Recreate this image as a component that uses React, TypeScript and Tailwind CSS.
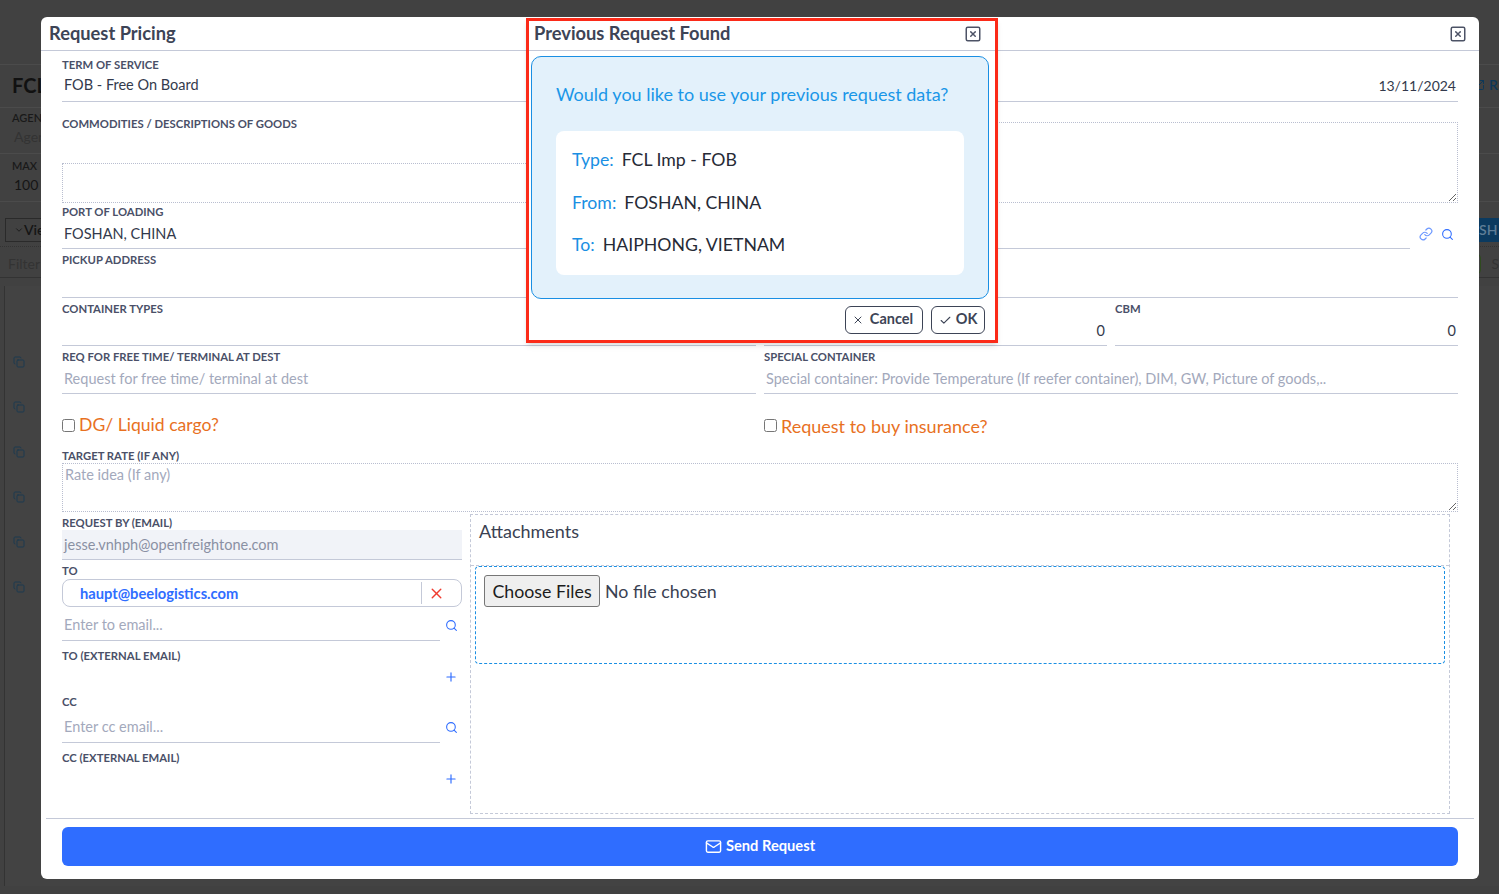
import React from 'react';
import { Check, ChevronDown, Copy, Link, Mail, Plus, Search, SquareArrowOutUpRight, SquareX, X } from 'lucide-react';

const labelClass = 'block h-[14px] text-[11.3px] leading-[14px] font-bold uppercase text-[#4a5068] whitespace-nowrap';
const valueClass = 'flex items-center px-[2px] text-[14.5px] text-[#333a4c] whitespace-nowrap';
const placeholderClass = 'w-full bg-transparent px-[2px] text-[14.5px] text-[#333a4c] outline-none placeholder:text-[#a3a9bc]';
const noteClass = 'w-full border border-dotted border-[#b9bed0] bg-transparent text-[14.5px] outline-none placeholder:text-[#a3a9bc]';

const Label: React.FC<{ children?: React.ReactNode }> = ({ children }) => <span className={labelClass}>{children}</span>;

// dimmed page that sits behind the modal
const BackgroundPage = () => {
  const rows = [361, 406, 451, 496, 541, 586];
  return (
    <div className="h-screen w-full overflow-hidden bg-[#414141]">
      <div className="h-[65px] border-b border-[#4b4b4b]" />
      <div className="flex h-[43px] items-center justify-between border-b border-[#4b4b4b] pb-[3px] pl-3">
        <span className="text-xl font-bold text-[#111111]">FCL</span>
        <span className="mr-px flex items-center gap-1 text-sm font-semibold text-[#0d3858]">
          <SquareArrowOutUpRight size={12} />
          R
        </span>
      </div>
      <div className="h-[46px] border-b border-[#4b4b4b] pl-3 pt-[2px]">
        <div className="text-[11px] font-semibold text-[#191919]">AGENT</div>
        <div className="pl-[2px] text-sm text-[#333333]">Agent</div>
      </div>
      <div className="h-[48px] border-b border-[#4b4b4b] pl-3 pt-1">
        <div className="text-[11px] font-semibold text-[#191919]">MAX</div>
        <div className="pl-[2px] text-sm text-[#151515]">100</div>
      </div>
      <div className="mt-4 flex h-[24px] items-center justify-between">
        <div className="ml-[5px] flex h-full w-[120px] items-center border border-[#2a2a2a] pl-2 text-sm font-semibold text-[#151515]">
          <ChevronDown size={10} />
          View
        </div>
        <div className="flex h-full w-[22px] items-center bg-[#0b3a5f] pl-[2px] text-sm font-semibold text-[#5f7d96]">SH</div>
      </div>
      <div className="mt-1 flex h-[31px] items-center justify-between border-t border-dotted border-[#333333] pl-2 pt-1">
        <span className="text-sm text-[#333333]">Filter</span>
        <span className="flex items-center gap-[10px]">
          <span className="h-5 w-[8px] rounded-r border border-[#2f4a1f]" />
          <span className="text-sm text-[#333333]">S</span>
        </span>
      </div>
      <div className="border-t border-[#333333]" />
      <div className="ml-1 mt-2 h-[600px] border-l border-[#333333] bg-[#434343]">
        <div className="flex flex-col gap-[33px] pl-2 pt-[70px]">
          {rows.map(y => (
            <Copy key={y} size={12} className="text-[#1d3a50]" />
          ))}
        </div>
      </div>
    </div>
  );
};

const EmailSearch: React.FC<{ placeholder: string }> = ({ placeholder }) => (
  <div className="flex h-[34px] items-center">
    <div className="flex h-full w-[378px] items-center border-b border-[#c4c9d8] pt-[2px]">
      <input placeholder={placeholder} className={placeholderClass} />
    </div>
    <Search size={13} className="ml-[5px] mt-[2px] text-[#2f6dff]" />
  </div>
);

const ExternalEmail: React.FC<{ label: string }> = ({ label }) => (
  <div className="mt-2 h-[46px]">
    <Label>{label}</Label>
    <div className="flex justify-end pr-[4px] pt-[7px]">
      <Plus size={14} className="text-[#2f6dff]" />
    </div>
  </div>
);

const PreviousRequestPopup = () => (
  <div className="absolute left-[485px] top-px h-[325px] w-[472px] border-[3px] border-[#fb2a18] bg-white shadow-md">
    <div className="flex h-[30px] items-center justify-between border-b border-[#c4c9d8] pb-[3px] pl-[5px] pr-[13px]">
      <span className="text-[18.3px] font-bold text-[#3d4456]">Previous Request Found</span>
      <SquareX size={18} className="text-[#4d5366]" />
    </div>
    <div className="ml-[2px] mt-[5px] h-[243px] w-[458px] rounded-[10px] border border-[#1a8fe3] bg-[#e3f1fb] px-6 pt-6">
      <div className="h-[26px] text-lg leading-[26px] text-[#1a97e8] whitespace-nowrap">Would you like to use your previous request data?</div>
      <div className="mt-6 rounded-lg bg-white px-4 py-2 text-[17.7px] leading-[42.5px] text-[#262a36]">
        <div><span className="mr-2 text-[#1a8fe3]">Type:</span>FCL Imp - FOB</div>
        <div><span className="mr-2 text-[#1a8fe3]">From:</span>FOSHAN, CHINA</div>
        <div><span className="mr-2 text-[#1a8fe3]">To:</span>HAIPHONG, VIETNAM</div>
      </div>
    </div>
    <div className="flex justify-end gap-2 pr-[10px] pt-[7px]">
      <button className="flex h-[28px] w-[78px] items-center justify-center gap-[6px] rounded-md border border-[#3d4456] pr-[3px] text-[14.5px] font-bold text-[#3d4456]">
        <X size={12} />
        <span className="pb-[2px]">Cancel</span>
      </button>
      <button className="flex h-[28px] w-[54px] items-center justify-center gap-[4px] rounded-md border border-[#3d4456] text-[14.5px] font-bold text-[#3d4456]">
        <Check size={13} />
        <span className="pb-[2px]">OK</span>
      </button>
    </div>
  </div>
);

const RequestPricingModal = () => (
  <div className="absolute left-[41px] top-[17px] flex h-[862px] w-[1438px] flex-col rounded-md bg-white">
    <div className="flex h-[34px] shrink-0 items-center justify-between border-b border-[#c4c9d8] pl-2 pr-[12px]">
      <span className="text-[18.3px] font-bold text-[#3d4456]">Request Pricing</span>
      <SquareX size={18} className="text-[#4d5366]" />
    </div>

    <div className="flex-1 px-[21px]">
      <div className="grid grid-cols-2 gap-x-2">
        <div className="border-b border-[#c4c9d8] pt-[7px]">
          <Label>Term of Service</Label>
          <div className={`${valueClass} h-[29px] pb-[3px]`}>FOB - Free On Board</div>
        </div>
        <div className="border-b border-[#c4c9d8] pt-[7px]">
          <Label>Valid Until</Label>
          <div className={`${valueClass} h-[29px] justify-end pb-[3px] !text-[14px]`}>13/11/2024</div>
        </div>
      </div>

      <div className="grid h-[101px] grid-cols-2 gap-x-2">
        <div className="flex flex-col justify-between pt-[15px]">
          <Label>Commodities / Descriptions of Goods</Label>
          <div className="h-[40px] border border-dotted border-[#b9bed0]" />
        </div>
        <div className="flex pt-5">
          <textarea className={`${noteClass} h-[81px]`} />
        </div>
      </div>

      <div className="grid grid-cols-2 gap-x-2">
        <div className="border-b border-[#c4c9d8] pt-[2px]">
          <Label>Port of Loading</Label>
          <div className={`${valueClass} h-[29px]`}>FOSHAN, CHINA</div>
        </div>
        <div className="flex pt-[2px]">
          <div className="flex-1 border-b border-[#c4c9d8]">
            <Label>Port of Discharge</Label>
            <div className="h-[29px]" />
          </div>
          <div className="flex w-[48px] items-center justify-end gap-[8px] pr-[4px] pt-[14px]">
            <Link size={14} className="text-[#6b97ff]" />
            <Search size={13} className="text-[#2f6dff]" />
          </div>
        </div>
      </div>

      <div className="border-b border-[#c4c9d8] pt-1">
        <Label>Pickup Address</Label>
        <div className="h-[30px]" />
      </div>

      <div className="grid grid-cols-4 gap-x-2">
        <div className="col-span-2 border-b border-[#c4c9d8] pt-1">
          <Label>Container Types</Label>
          <div className="h-[29px]" />
        </div>
        <div className="border-b border-[#c4c9d8] pt-1">
          <Label>GW</Label>
          <div className={`${valueClass} h-[29px] justify-end`}>0</div>
        </div>
        <div className="border-b border-[#c4c9d8] pt-1">
          <Label>CBM</Label>
          <div className={`${valueClass} h-[29px] justify-end`}>0</div>
        </div>
      </div>

      <div className="grid grid-cols-2 gap-x-2">
        <div className="border-b border-[#c4c9d8] pt-1">
          <Label>Req for free time/ terminal at dest</Label>
          <input placeholder="Request for free time/ terminal at dest" className={`${placeholderClass} h-[29px]`} />
        </div>
        <div className="border-b border-[#c4c9d8] pt-1">
          <Label>Special Container</Label>
          <input placeholder="Special container: Provide Temperature (If reefer container), DIM, GW, Picture of goods,.." className={`${placeholderClass} h-[29px]`} />
        </div>
      </div>

      <div className="grid h-[55px] grid-cols-2 gap-x-2 pt-2">
        <label className="flex items-center gap-1 text-[17.6px] text-[#e8711f]">
          <input type="checkbox" />
          DG/ Liquid cargo?
        </label>
        <label className="flex items-center gap-1 text-lg text-[#e8711f]">
          <input type="checkbox" />
          Request to buy insurance?
        </label>
      </div>

      <Label>Target Rate (If Any)</Label>
      <textarea placeholder="Rate idea (If any)" className={`${noteClass} block h-[49px] px-[2px]`} />

      <div className="mt-[2px] flex gap-2">
        <div className="w-[400px] shrink-0 pt-[2px]">
          <Label>Request By (Email)</Label>
          <div className="flex h-[30px] items-center border-b border-[#c4c9d8] bg-[#f1f3f8] px-[2px] text-[14.5px] text-[#8a90a3]">jesse.vnhph@openfreightone.com</div>
          <div className="mt-1">
            <Label>To</Label>
          </div>
          <div className="mt-px flex h-[28px] items-center rounded-lg border border-[#c4c9d8]">
            <span className="flex-1 pl-[17px] text-[14.7px] font-bold text-[#2f6dff]">haupt@beelogistics.com</span>
            <span className="flex h-[22px] w-[40px] items-center justify-center border-l border-[#c4c9d8]">
              <X size={17} className="mr-[10px] text-[#f03a2e]" />
            </span>
          </div>
          <EmailSearch placeholder="Enter to email..." />
          <ExternalEmail label="To (External Email)" />
          <Label>CC</Label>
          <EmailSearch placeholder="Enter cc email..." />
          <ExternalEmail label="CC (External Email)" />
        </div>

        <div className="h-[300px] w-[980px] border border-dashed border-[#c4c9d8]">
          <div className="h-[50px] pl-2 pt-[3px] text-lg leading-[26px] text-[#3a4152]">Attachments</div>
          <div className="border-t border-dashed border-[#c4c9d8]">
            <div className="mx-[4px] h-[98px] rounded-[4px] border border-dashed border-[#1a8fe3] pl-2 pt-2">
              <div className="flex items-center gap-[5px] text-[17.8px] text-[#3a4152]">
                <button className="flex h-[32px] w-[116px] items-center justify-center rounded-[3px] border border-[#767676] bg-[#efefef] text-[#1c1c1c]">Choose Files</button>
                No file chosen
              </div>
            </div>
          </div>
        </div>
      </div>
    </div>

    <div className="mx-[5px] h-[61px] shrink-0 border-t border-[#c4c9d8] px-4 pt-2">
      <button className="flex h-[39px] w-full items-center justify-center gap-1 rounded-md bg-[#2f6dff] text-[14.7px] font-bold text-white">
        <Mail size={17} />
        <span className="pb-[3px]">Send Request</span>
      </button>
    </div>

    <PreviousRequestPopup />
  </div>
);

export default function App() {
  return (
    <div className="relative h-screen w-full overflow-hidden font-['Lato',sans-serif]">
      <BackgroundPage />
      <RequestPricingModal />
    </div>
  );
}
